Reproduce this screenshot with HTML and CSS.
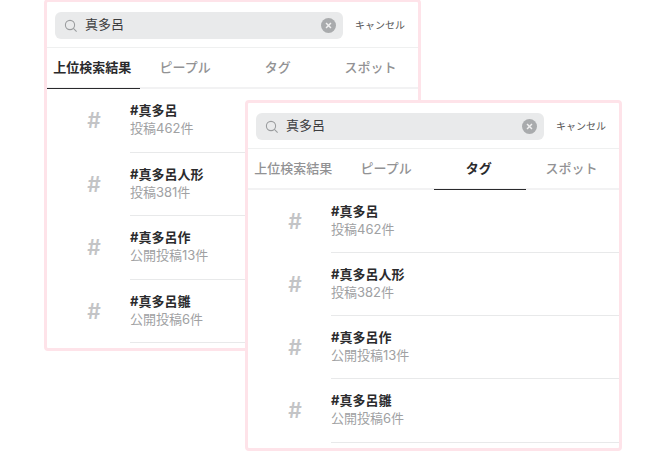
FILE: index.html
```html
<!DOCTYPE html>
<html lang="ja">
<head>
<meta charset="utf-8">
<title>検索</title>
<link rel="stylesheet" href="styles.css">
</head>
<body>
<section class="card card-back">
  <div class="searchbar">
    <div class="field">
      <svg class="glass" viewBox="0 0 14 14"><circle cx="6" cy="6" r="4.6"/><path d="M9.4 9.4l3.2 3.2"/></svg>
      <span class="query">真多呂</span>
      <svg class="clear" viewBox="0 0 14 14"><circle cx="7" cy="7" r="7"/><path d="M4.7 4.7l4.6 4.6M9.3 4.7l-4.6 4.6"/></svg>
    </div>
    <span class="cancel">キャンセル</span>
  </div>
  <nav class="tabs">
    <span class="tab active">上位検索結果</span>
    <span class="tab">ピープル</span>
    <span class="tab">タグ</span>
    <span class="tab">スポット</span>
  </nav>
  <ul class="rows">
    <li class="row"><span class="hash">#</span><div class="info"><b>#真多呂</b><small>投稿462件</small></div></li>
    <li class="row"><span class="hash">#</span><div class="info"><b>#真多呂人形</b><small>投稿381件</small></div></li>
    <li class="row"><span class="hash">#</span><div class="info"><b>#真多呂作</b><small>公開投稿13件</small></div></li>
    <li class="row"><span class="hash">#</span><div class="info"><b>#真多呂雛</b><small>公開投稿6件</small></div></li>
  </ul>
</section>
<section class="card card-front">
  <div class="searchbar">
    <div class="field">
      <svg class="glass" viewBox="0 0 14 14"><circle cx="6" cy="6" r="4.6"/><path d="M9.4 9.4l3.2 3.2"/></svg>
      <span class="query">真多呂</span>
      <svg class="clear" viewBox="0 0 14 14"><circle cx="7" cy="7" r="7"/><path d="M4.7 4.7l4.6 4.6M9.3 4.7l-4.6 4.6"/></svg>
    </div>
    <span class="cancel">キャンセル</span>
  </div>
  <nav class="tabs">
    <span class="tab">上位検索結果</span>
    <span class="tab">ピープル</span>
    <span class="tab active">タグ</span>
    <span class="tab">スポット</span>
  </nav>
  <ul class="rows">
    <li class="row"><span class="hash">#</span><div class="info"><b>#真多呂</b><small>投稿462件</small></div></li>
    <li class="row"><span class="hash">#</span><div class="info"><b>#真多呂人形</b><small>投稿382件</small></div></li>
    <li class="row"><span class="hash">#</span><div class="info"><b>#真多呂作</b><small>公開投稿13件</small></div></li>
    <li class="row"><span class="hash">#</span><div class="info"><b>#真多呂雛</b><small>公開投稿6件</small></div></li>
  </ul>
</section>
</body>
</html>
```
FILE: styles.css
```css
* { box-sizing: border-box; }
html, body { margin: 0; padding: 0; }
body {
  position: relative;
  width: 650px;
  height: 451px;
  overflow: hidden;
  background: #fff;
  font-family: Inter, "Noto Sans CJK JP", sans-serif;
}
.card {
  position: absolute;
  width: 377px;
  height: 351px;
  background: #fff;
  border: 3px solid #fee3e9;
  border-radius: 4px;
  overflow: hidden;
}
.card-back { left: 44px; top: -1px; height: 352px; }
.card-front { left: 245px; top: 100px; }
.searchbar {
  display: flex;
  align-items: center;
  height: 46px;
  padding: 9px 0 7px 8px;
  border-bottom: 1px solid #eff0f0;
}
.field {
  display: flex;
  align-items: center;
  width: 288px;
  height: 27px;
  padding: 0 7px 0 9px;
  background: #e9eaeb;
  border-radius: 6px;
}
.glass { width: 14px; height: 14px; fill: none; stroke: #9a9c9e; stroke-width: 1.1; flex: none; }
.query { margin: 0 0 2px 7px; font-size: 13px; line-height: 25px; color: #3c3c3e; }
.clear { width: 15px; height: 15px; margin-left: auto; flex: none; fill: #a9abad; stroke: #f0f0f0; stroke-width: 1.4; }
.clear circle { stroke: none; }
.cancel { margin-left: 12px; font-size: 10px; line-height: 27px; color: #555; white-space: nowrap; }
.tabs {
  display: grid;
  grid-template-columns: repeat(4, 1fr);
  height: 41px;
  border-bottom: 2px solid #f2f2f3;
}
.tab {
  height: 41px;
  padding-right: 2px;
  font-size: 13px;
  font-weight: 500;
  line-height: 38px;
  text-align: center;
  color: #929294;
  white-space: nowrap;
}
.tab.active {
  color: #2a2a2c;
  font-weight: 700;
  border-bottom: 1px solid #2a2a2c;
}
.rows { margin: 0; padding: 0; list-style: none; }
.row { display: flex; height: 63.15px; }
.card-back .row { height: 63.6px; }
.hash {
  width: 83px;
  padding-left: 11px;
  text-align: center;
  font-size: 21px;
  font-weight: 600;
  line-height: 63px;
  color: #c3c4c6;
  flex: none;
}
.info {
  flex: 1;
  display: flex;
  flex-direction: column;
  padding-top: 12px;
  border-bottom: 1px solid #e8e9ea;
}
.info b { font-size: 13px; font-weight: 700; line-height: 19px; color: #2b2b2d; }
.info small { margin-top: -1px; font-size: 13px; line-height: 18px; color: #a0a1a3; }
```
